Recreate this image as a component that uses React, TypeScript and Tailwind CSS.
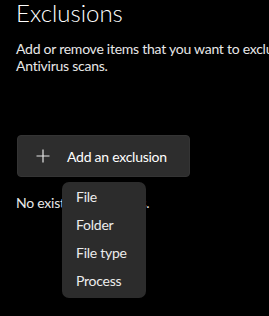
import React from 'react';

const menuItems = ["File", "Folder", "File type", "Process"];

const App: React.FC = () => {
  return (
    <div
      className="relative w-[269px] h-[316px] overflow-hidden bg-black text-white"
      style={{ fontFamily: 'Lato, "Noto Sans", sans-serif' }}
    >
      <div className="pl-4">
        <h1 className="mt-[1px] text-[24px] font-light leading-none text-white">Exclusions</h1>
        <p className="mt-4 whitespace-nowrap text-[14px] leading-[16.5px] tracking-[-0.25px] text-[#e8e8e8]">
          Add or remove items that you want to exclude from Microsoft Defender
          <br />
          Antivirus scans.
        </p>
        <button className="ml-[1px] mt-[61px] flex h-[42px] w-[173px] items-center rounded-[4px] border border-[#343434] bg-[#2d2d2d] pl-[18px] text-[14px] tracking-[-0.25px] text-white">
          <svg width="14" height="14" viewBox="0 0 14 14" className="mr-[17px]">
            <path d="M7 0.5V13.5M0.5 7H13.5" stroke="#e6e6e6" strokeWidth="1.2" />
          </svg>
          Add an exclusion
        </button>
        <p className="mt-4 text-[14px] leading-5 tracking-[-0.25px] text-[#e8e8e8]">No existing exclusions.</p>
      </div>

      {/* dropdown menu over the page */}
      <div className="absolute left-[62px] top-[182px] w-[84px] rounded-[7px] bg-[#2c2c2c] pb-[3px] pl-[14px] pt-[1px] shadow-lg">
        {menuItems.map((item) => (
          <div key={item} className="h-7 text-[14px] leading-7 tracking-[-0.25px] text-[#ededed]">
            {item}
          </div>
        ))}
      </div>
    </div>
  );
};

export default App;
